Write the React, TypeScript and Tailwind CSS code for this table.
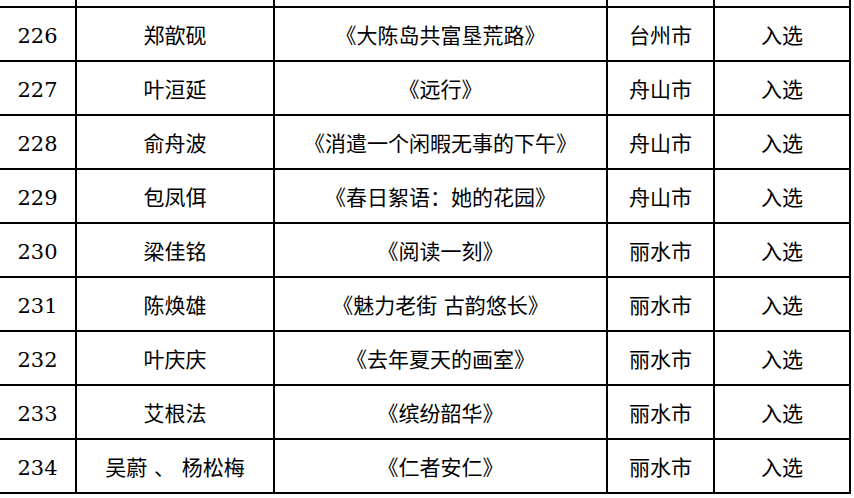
import React from 'react';

interface Row {
  no: string;
  name: string;
  title: string;
  city: string;
  result: string;
}

const rows: Row[] = [
  { no: '226', name: '郑歆砚', title: '《大陈岛共富垦荒路》', city: '台州市', result: '入选' },
  { no: '227', name: '叶洹延', title: '《远行》', city: '舟山市', result: '入选' },
  { no: '228', name: '俞舟波', title: '《消遣一个闲暇无事的下午》', city: '舟山市', result: '入选' },
  { no: '229', name: '包凤佴', title: '《春日絮语：她的花园》', city: '舟山市', result: '入选' },
  { no: '230', name: '梁佳铭', title: '《阅读一刻》', city: '丽水市', result: '入选' },
  { no: '231', name: '陈焕雄', title: '《魅力老街 古韵悠长》', city: '丽水市', result: '入选' },
  { no: '232', name: '叶庆庆', title: '《去年夏天的画室》', city: '丽水市', result: '入选' },
  { no: '233', name: '艾根法', title: '《缤纷韶华》', city: '丽水市', result: '入选' },
  { no: '234', name: '吴蔚 、 杨松梅', title: '《仁者安仁》', city: '丽水市', result: '入选' },
];

const cols = 'grid grid-cols-[77px_198px_333px_107px_136px]';
const cell = 'flex items-center justify-center border-r-2 border-b-2 border-black';

export default function App() {
  return (
    <div
      className="w-[854px] h-[498px] bg-white text-black overflow-hidden"
      style={{ fontFamily: '"DejaVu Serif", "Noto Sans CJK SC", serif' }}
    >
      {/* tail of the previous row, cut off at the top */}
      <div className={cols}>
        {[0, 1, 2, 3, 4].map((i) => (
          <div key={i} className={`${cell} h-[8px]`} />
        ))}
      </div>
      {rows.map((r) => (
        <div key={r.no} className={`${cols} text-[21px] leading-none`}>
          <div className={`${cell} h-[54px] pt-[4px]`}>{r.no}</div>
          <div className={`${cell} h-[54px] pt-[4px]`}>{r.name}</div>
          <div className={`${cell} h-[54px] pt-[4px]`}>{r.title}</div>
          <div className={`${cell} h-[54px] pt-[4px]`}>{r.city}</div>
          <div className={`${cell} h-[54px] pt-[4px]`}>{r.result}</div>
        </div>
      ))}
    </div>
  );
}
